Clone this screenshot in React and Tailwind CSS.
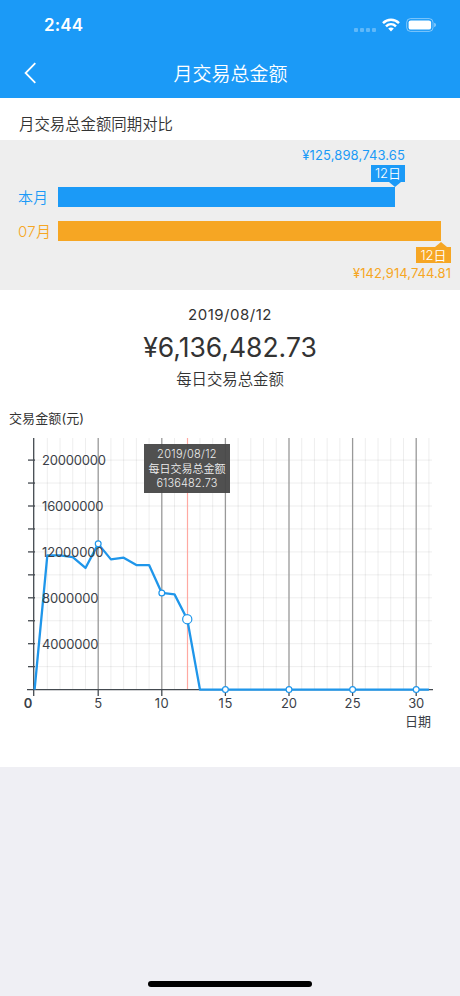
const days = Array.from({ length: 32 }, (_, i) => i);
const x = (d) => 34.6 + d * 12.72;
const y = (v) => 259.6 - v * 11.475;

// Daily totals, in millions
const totals = [0, 11.7, 11.7, 11.55, 10.6, 12.7, 11.35, 11.5, 10.85, 10.85, 8.42, 8.3, 6.136, 0, 0, 0, 0, 0, 0, 0, 0, 0, 0, 0, 0, 0, 0, 0, 0, 0, 0, 0];
const yLabels = [
  { v: 20, text: "20000000", w: 64 },
  { v: 16, text: "16000000", w: 61.5 },
  { v: 12, text: "12000000", w: 61.5 },
  { v: 8, text: "8000000", w: 56.5 },
  { v: 4, text: "4000000", w: 56.5 },
];

function StatusBar() {
  return (
    <div className="flex h-[50px] items-center justify-between pl-11 pr-[24px] pt-[1px]">
      <span className="text-[17px] font-semibold leading-none tracking-[0.1px]">2:44</span>
      <div className="flex items-center">
        <div className="mr-[6px] mt-[9px] flex gap-[2px]">
          <i className="size-[4px] rounded-[1px] bg-white/30" />
          <i className="size-[4px] rounded-[1px] bg-white/30" />
          <i className="size-[4px] rounded-[1px] bg-white/30" />
          <i className="size-[4px] rounded-[1px] bg-white/30" />
        </div>
        <svg className="mt-[-1px]" width="18" height="14" viewBox="0 0 18 14" fill="none" stroke="white" strokeWidth="2.5">
          <path d="M1 5.2C5.6 .7 12.4 .7 17 5.2" />
          <path d="M4 8.4C6.9 5.6 11.1 5.6 14 8.4" />
          <path d="M6.2 10.6C7.8 9.1 10.2 9.1 11.8 10.6L9 13.5Z" fill="white" stroke="none" />
        </svg>
        <svg className="ml-[6px] mt-[-1px]" width="30" height="14" viewBox="0 0 30 14" fill="none">
          <rect x=".7" y=".6" width="26.3" height="12.8" rx="3.8" stroke="white" strokeOpacity=".45" />
          <rect x="2.6" y="2.4" width="22.5" height="9.2" rx="2.2" fill="white" />
          <path d="M28.2 4.8Q30 5.4 30 7T28.2 9.2Z" fill="white" fillOpacity=".5" />
        </svg>
      </div>
    </div>
  );
}

function NavBar() {
  return (
    <div className="grid h-12 grid-cols-[60px_1fr_60px] items-center">
      <svg className="ml-6 mt-[-3px]" width="13" height="22" viewBox="0 0 13 22" fill="none" stroke="white" strokeWidth="1.8">
        <path d="M11.3 1.2L1.6 11L11.3 20.8" />
      </svg>
      <h1 className="pl-px text-center text-[19px] font-[350] leading-none">月交易总金额</h1>
    </div>
  );
}

function Comparison() {
  return (
    <section className="h-[150px] bg-[#eeeeee] pt-[7px] font-[350]">
      <div className="flex flex-col items-end pr-[55px] text-[#1b9af7]">
        <span className="text-[13px] font-normal leading-4 tracking-[0.12px]">¥125,898,743.65</span>
        <span className="mt-[2px] flex h-[17px] w-[34px] items-center justify-center bg-[#1b9af7] text-[13px] leading-none text-white">12日</span>
        <svg className="mr-[4px]" width="12" height="5"><path d="M0 0H12L6 5Z" fill="#1b9af7" /></svg>
      </div>
      <div className="flex h-5 items-center">
        <span className="w-[58px] pl-[18px] pt-[2px] text-[15px] leading-5 text-[#1b9af7]">本月</span>
        <div className="h-5 w-[337px] bg-[#1b9af7]" />
      </div>
      <div className="mt-[14px] flex h-5 items-center">
        <span className="w-[58px] whitespace-nowrap pl-[18px] pt-[2px] text-[15px] leading-5 tracking-[0.3px] text-[#f6a623]">07月</span>
        <div className="h-5 w-[383px] bg-[#f6a623]" />
      </div>
      <div className="flex flex-col items-end pr-[9px] text-[#f6a623]">
        <svg className="mr-[4px] mt-[1px]" width="12" height="5"><path d="M0 5H12L6 0Z" fill="#f6a623" /></svg>
        <span className="flex h-4 w-[35px] items-center justify-center bg-[#f6a623] text-[13px] leading-none text-white">12日</span>
        <span className="mt-[2px] text-[13px] font-normal leading-4 tracking-[0.06px]">¥142,914,744.81</span>
      </div>
    </section>
  );
}

function Chart() {
  return (
    <div className="relative">
      <svg className="block" width="460" height="337" viewBox="0 0 460 337">
        <g stroke="#000" strokeOpacity=".07" strokeWidth="1">
          {days.slice(1).map((d) => d % 5 !== 0 && d !== 12 && <path key={d} d={`M${x(d)} 8V259`} />)}
          {days.slice(1, 11).map((i) => <path key={i} d={`M34 ${y(i * 2)}H432`} />)}
        </g>
        <g stroke="#999" strokeWidth="1.3">
          {[5, 10, 15, 20, 25, 30].map((d) => <path key={d} d={`M${x(d)} 8V259`} />)}
        </g>
        <path d="M187.5 8V259" stroke="#ffa9a2" strokeWidth="1.2" />
        <g stroke="#444a50" strokeWidth="1.3">
          <path d="M33.7 8V266M27 259.6H433" />
          {days.slice(1, 11).map((i) => <path key={i} d={`M28 ${y(i * 2)}H35`} />)}
          {[5, 10, 15, 20, 25, 30].map((d) => <path key={d} d={`M${x(d)} 260V266`} />)}
        </g>
        <path d={"M" + totals.map((v, d) => `${x(d)} ${y(v)}`).join("L")} fill="none" stroke="#1f96ea" strokeWidth="2.3" strokeLinejoin="round" />
        <g fill="#fff" stroke="#1f96ea" strokeWidth="1.2">
          {[5, 10, 15, 20, 25, 30].map((d) => <circle key={d} cx={x(d)} cy={y(totals[d])} r="2.9" />)}
          <circle cx={x(12)} cy={y(totals[12])} r="4.6" />
        </g>
        <g fill="#3b3f48" fontSize="13">
          {yLabels.map((l) => (
            <text key={l.v} x="42" y={y(l.v) + 5} textLength={l.w}>{l.text}</text>
          ))}
          <text x="28" y="277.5" textAnchor="middle" fontWeight="600">0</text>
          {[5, 10, 15, 20, 25, 30].map((d) => (
            <text key={d} x={x(d)} y="277.5" textAnchor="middle" textLength={d === 5 ? 8 : d < 20 ? 14 : 16}>{d}</text>
          ))}
          <text x="431" y="296" textAnchor="end">日期</text>
        </g>
      </svg>
      <div className="absolute left-[144px] top-[14px] flex h-[49px] w-[86px] flex-col items-center justify-center bg-[#474747]/95 pt-px text-[11px] font-[350] leading-[14.5px] text-[#eeeeee]">
        <span className="tracking-[0.3px]">2019/08/12</span>
        <span>每日交易总金额</span>
        <span className="tracking-[0.1px]">6136482.73</span>
      </div>
    </div>
  );
}

export default function App() {
  return (
    <div className="flex h-[996px] w-[460px] flex-col bg-[#efeff4] font-['Inter','Noto_Sans_CJK_SC',sans-serif] text-[#333333]">
      <header className="h-[98px] bg-[#1b9af7] text-white">
        <StatusBar />
        <NavBar />
      </header>
      <main className="h-[669px] bg-white">
        <h2 className="flex h-[42px] items-center pl-[19px] pt-[11px] text-[15.4px] font-[350] leading-none">月交易总金额同期对比</h2>
        <Comparison />
        <section className="flex h-[113px] flex-col items-center pt-[15px]">
          <p className="text-[15px] leading-5 tracking-[0.5px]">2019/08/12</p>
          <p className="mt-[6px] text-[26.5px] leading-8">¥6,136,482.73</p>
          <p className="mt-[7px] text-[15.4px] font-[350] leading-5">每日交易总金额</p>
        </section>
        <p className="flex h-[27px] items-center pl-[9px] pt-[4px] text-[13px] leading-none tracking-[0.1px]">交易金额(元)</p>
        <Chart />
      </main>
      <footer className="flex flex-1 items-end justify-center pb-[9px]">
        <div className="h-[6px] w-[164px] rounded-full bg-black" />
      </footer>
    </div>
  );
}
